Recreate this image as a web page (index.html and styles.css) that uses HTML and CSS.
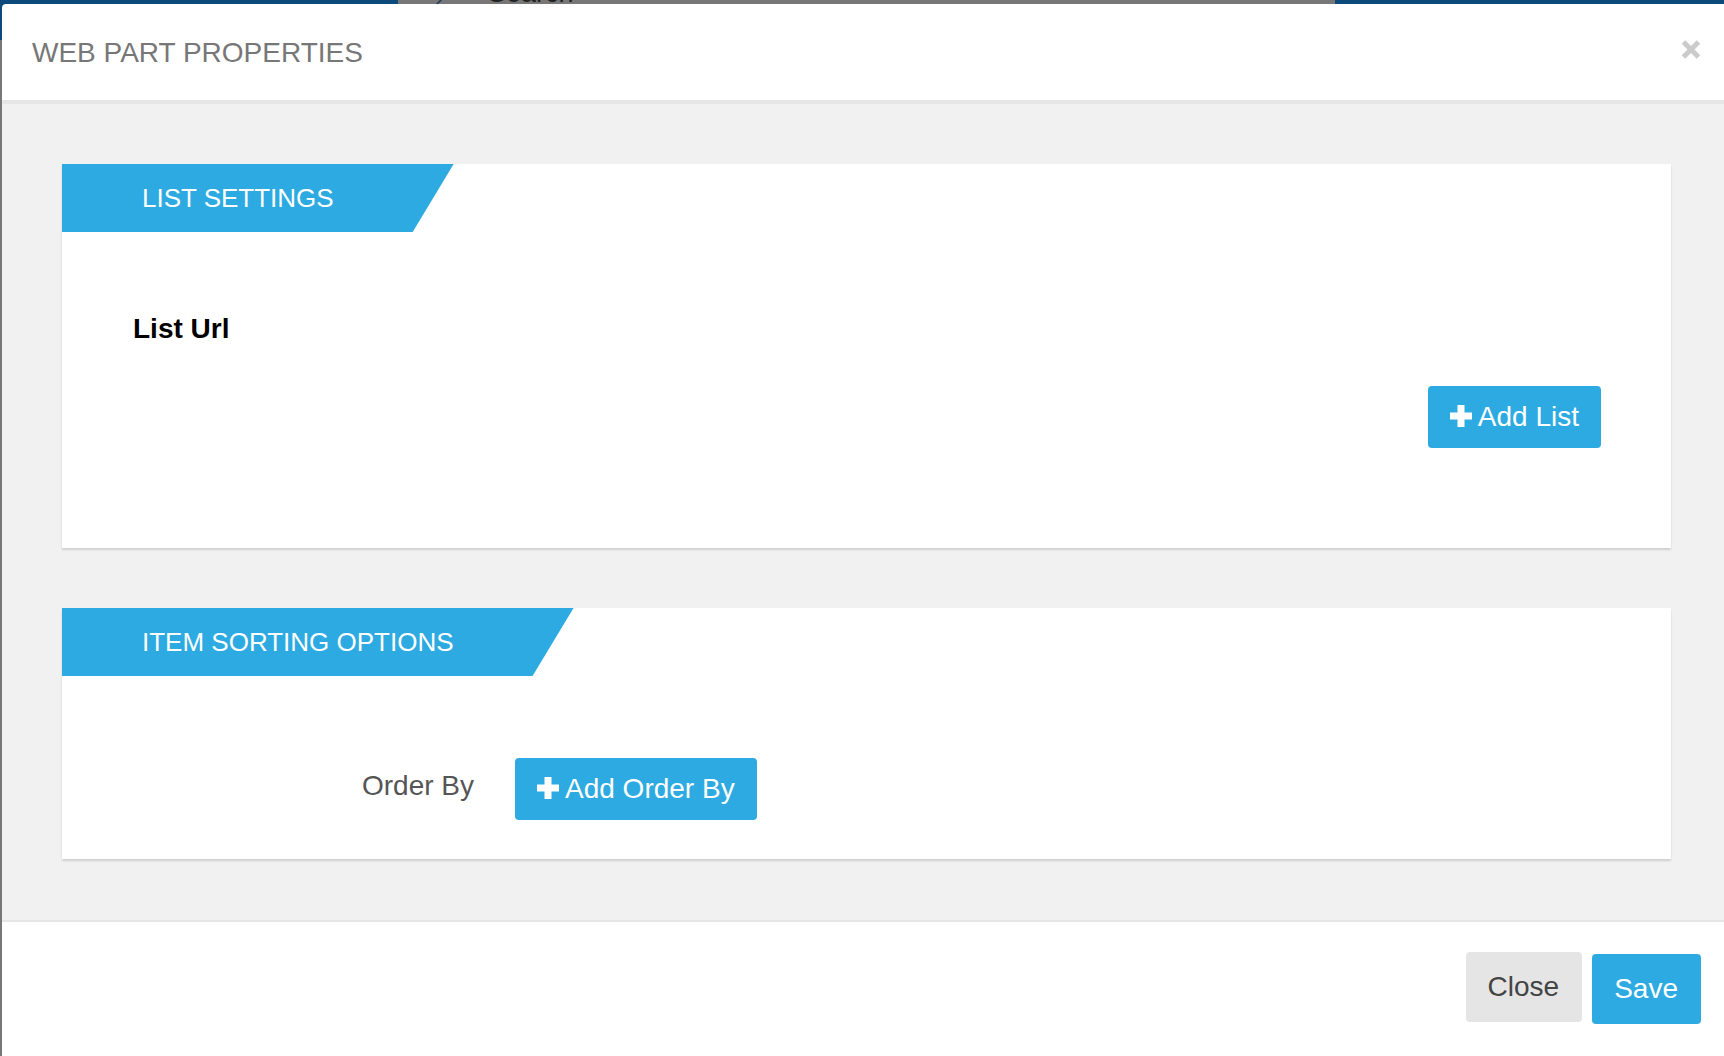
FILE: index.html
```html
<!DOCTYPE html>
<html lang="en">
   <head>
      <meta charset="UTF-8">
      <meta name="viewport" content="width=device-width, initial-scale=1.0">
      <title>Web Part Properties</title>
      <link rel="stylesheet" href="styles.css">
   </head>
   <body>
      <div class="page-bar">
         <div class="bar-blue"></div>
         <div class="bar-search">
            <svg class="search-mark" width="12" height="8" viewBox="0 0 12 8"><path d="M11 -3 L2 6" stroke="#1f3b57" stroke-width="1.6" fill="none"/></svg>
            <span class="search-text">Search</span>
         </div>
         <div class="bar-blue bar-rest"></div>
      </div>

      <div class="modal">
         <div class="modal-header">
            <h4 class="modal-title">WEB PART PROPERTIES</h4>
            <button class="close" type="button" aria-label="Close">
               <svg width="20" height="21" viewBox="0 0 20 21"><path d="M2.5 3 L17.5 18 M17.5 3 L2.5 18" stroke="currentColor" stroke-width="5" fill="none"/></svg>
            </button>
         </div>

         <div class="modal-body">
            <div class="panel">
               <div class="panel-heading"><span>LIST SETTINGS</span></div>
               <div class="panel-body list-body">
                  <label class="field-label">List Url</label>
                  <div class="actions-right">
                     <button class="btn btn-blue" type="button">
                        <svg class="plus" width="22" height="22" viewBox="0 0 22 22"><path d="M7.5 0h7v7.5H22v7h-7.5V22h-7v-7.5H0v-7h7.5z" fill="currentColor"/></svg>Add List
                     </button>
                  </div>
               </div>
            </div>

            <div class="panel">
               <div class="panel-heading"><span>ITEM SORTING OPTIONS</span></div>
               <div class="panel-body sort-body">
                  <div class="form-row">
                     <label class="row-label">Order By</label>
                     <button class="btn btn-blue" type="button">
                        <svg class="plus" width="22" height="22" viewBox="0 0 22 22"><path d="M7.5 0h7v7.5H22v7h-7.5V22h-7v-7.5H0v-7h7.5z" fill="currentColor"/></svg>Add Order By
                     </button>
                  </div>
               </div>
            </div>
         </div>

         <div class="modal-footer">
            <button class="btn btn-grey" type="button">Close</button>
            <button class="btn btn-blue btn-save" type="button">Save</button>
         </div>
      </div>
   </body>
</html>
```

FILE: styles.css
```css
body {
margin: 0;
width: 1724px;
height: 1056px;
overflow: hidden;
background: #777;
font-family: "Liberation Sans", Arial, sans-serif;
}
/* page behind the modal, only its edges show */
.page-bar {
display: flex;
height: 40px;
overflow: hidden;
}
.bar-blue {
width: 398px;
background: #0c4a7c;
}
.bar-rest {
flex: 1;
}
.bar-search {
width: 937px;
display: flex;
align-items: flex-start;
background: #777;
}
.search-mark {
margin-left: 35px;
}
.search-text {
margin-left: 43px;
margin-top: -21px;
font-size: 27px;
line-height: 28px;
color: #222;
}
.modal {
position: absolute;
top: 4px;
left: 2px;
width: 1729px;
background: #fff;
border-top-left-radius: 4px;
}
.modal-header {
display: flex;
align-items: center;
justify-content: space-between;
height: 96px;
padding: 0 30px;
border-bottom: 4px solid #e6e6e6;
}
.modal-title {
margin: 2px 0 0;
font-size: 28px;
font-weight: normal;
color: #777;
}
.close {
display: flex;
padding: 0;
margin-bottom: 5px;
border: none;
background: none;
color: #cbcbcb;
}
.modal-body {
background: #f1f1f1;
padding: 60px 60px 61px;
display: flex;
flex-direction: column;
gap: 60px;
}
.panel {
background: #fff;
box-shadow: 0 2px 2px rgba(0, 0, 0, 0.14);
}
.panel-heading span {
display: inline-block;
height: 68px;
line-height: 68px;
padding: 0 120px 0 80px;
background: #2daae1;
color: #fff;
font-size: 26px;
clip-path: polygon(0 0, 100% 0, calc(100% - 41px) 100%, 0 100%);
}
.list-body {
padding: 77px 70px 100px 71px;
}
.field-label {
display: block;
font-size: 28px;
line-height: 40px;
font-weight: bold;
color: #000;
}
.actions-right {
display: flex;
justify-content: flex-end;
margin-top: 37px;
}
.sort-body {
padding: 82px 0 39px;
}
.form-row {
display: flex;
align-items: center;
gap: 41px;
}
.row-label {
width: 412px;
text-align: right;
font-size: 28px;
color: #555;
margin-bottom: 6px;
}
.btn {
display: inline-flex;
align-items: center;
gap: 6px;
height: 62px;
padding: 0 22px;
border: none;
border-radius: 4px;
font-family: "Liberation Sans", Arial, sans-serif;
font-size: 28px;
}
.btn-blue {
background: #2daae1;
color: #fff;
}
.plus {
margin-bottom: 3px;
}
.modal-footer {
display: flex;
justify-content: flex-end;
align-items: flex-start;
gap: 10px;
padding: 30px 30px 40px;
border-top: 2px solid #e6e6e6;
}
.modal-footer .btn {
height: 70px;
padding: 0 23px 0 22px;
}
.btn-grey {
background: #e5e5e5;
color: #444;
}
.btn-save {
margin-top: 2px;
padding: 0 22px 0 23px;
}
```
